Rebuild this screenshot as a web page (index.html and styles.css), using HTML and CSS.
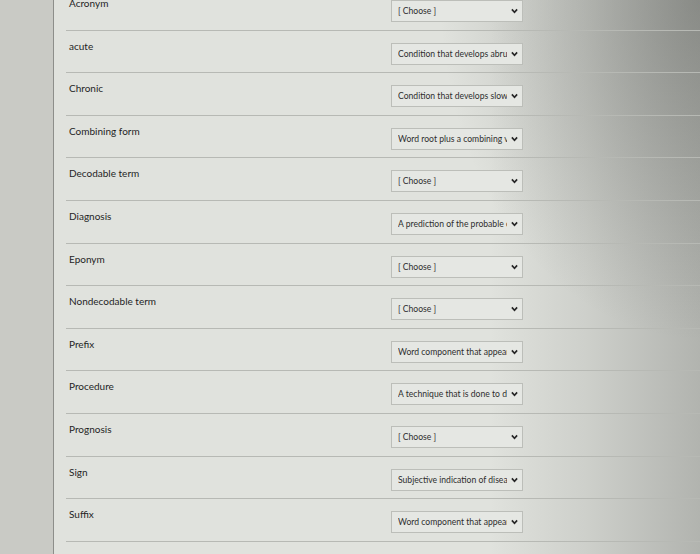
FILE: index.html
```html
<!DOCTYPE html>
<html>
<head>
<meta charset="utf-8">
<link rel="stylesheet" href="styles.css">
</head>
<body>
<div class="page">
  <div class="sidebar"></div>
  <div class="main">
    <div class="list">
      <div class="row"><div class="label">Acronym</div><div class="select"><span class="val">[ Choose ]</span><svg class="chev" viewBox="0 0 8 6"><path d="M1 1.2 L4 4.4 L7 1.2"/></svg></div></div>
      <div class="row"><div class="label">acute</div><div class="select"><span class="val">Condition that develops abruptly</span><svg class="chev" viewBox="0 0 8 6"><path d="M1 1.2 L4 4.4 L7 1.2"/></svg></div></div>
      <div class="row"><div class="label">Chronic</div><div class="select"><span class="val">Condition that develops slowly</span><svg class="chev" viewBox="0 0 8 6"><path d="M1 1.2 L4 4.4 L7 1.2"/></svg></div></div>
      <div class="row"><div class="label">Combining form</div><div class="select"><span class="val">Word root plus a combining vowel</span><svg class="chev" viewBox="0 0 8 6"><path d="M1 1.2 L4 4.4 L7 1.2"/></svg></div></div>
      <div class="row"><div class="label">Decodable term</div><div class="select"><span class="val">[ Choose ]</span><svg class="chev" viewBox="0 0 8 6"><path d="M1 1.2 L4 4.4 L7 1.2"/></svg></div></div>
      <div class="row"><div class="label">Diagnosis</div><div class="select"><span class="val">A prediction of the probable outcome</span><svg class="chev" viewBox="0 0 8 6"><path d="M1 1.2 L4 4.4 L7 1.2"/></svg></div></div>
      <div class="row"><div class="label">Eponym</div><div class="select"><span class="val">[ Choose ]</span><svg class="chev" viewBox="0 0 8 6"><path d="M1 1.2 L4 4.4 L7 1.2"/></svg></div></div>
      <div class="row"><div class="label">Nondecodable term</div><div class="select"><span class="val">[ Choose ]</span><svg class="chev" viewBox="0 0 8 6"><path d="M1 1.2 L4 4.4 L7 1.2"/></svg></div></div>
      <div class="row"><div class="label">Prefix</div><div class="select"><span class="val">Word component that appears</span><svg class="chev" viewBox="0 0 8 6"><path d="M1 1.2 L4 4.4 L7 1.2"/></svg></div></div>
      <div class="row"><div class="label">Procedure</div><div class="select"><span class="val">A technique that is done to diagnose</span><svg class="chev" viewBox="0 0 8 6"><path d="M1 1.2 L4 4.4 L7 1.2"/></svg></div></div>
      <div class="row"><div class="label">Prognosis</div><div class="select"><span class="val">[ Choose ]</span><svg class="chev" viewBox="0 0 8 6"><path d="M1 1.2 L4 4.4 L7 1.2"/></svg></div></div>
      <div class="row"><div class="label">Sign</div><div class="select"><span class="val">Subjective indication of disease</span><svg class="chev" viewBox="0 0 8 6"><path d="M1 1.2 L4 4.4 L7 1.2"/></svg></div></div>
      <div class="row"><div class="label">Suffix</div><div class="select"><span class="val">Word component that appears</span><svg class="chev" viewBox="0 0 8 6"><path d="M1 1.2 L4 4.4 L7 1.2"/></svg></div></div>
      <div class="row"><div class="label"></div><div class="select"></div></div>
    </div>
  </div>
</div>
</body>
</html>
```

FILE: styles.css
```css
html, body {
  margin: 0;
  padding: 0;
  height: 100%;
  overflow: hidden;
}
body {
  font-family: Lato, "Open Sans", "Liberation Sans", sans-serif;
  background: #dfe1dc;
}
.page {
  display: flex;
  height: 554px;
  overflow: hidden;
  background:
    radial-gradient(ellipse 260px 340px at 100% 0%, rgba(70,72,68,0.38), rgba(70,72,68,0) 100%),
    linear-gradient(to right, rgba(70,72,68,0) 0%, rgba(70,72,68,0) 70%, rgba(70,72,68,0.12) 84%, rgba(70,72,68,0.30) 100%),
    #e0e2dd;
}
.sidebar {
  width: 53px;
  flex: none;
  background: #c9cac5;
  border-right: 1px solid #8d8e8a;
}
.main {
  flex: 1;
  padding-left: 12px;
  overflow: hidden;
}
.list {
  margin-top: -13px;
}
.row {
  box-sizing: border-box;
  height: 42.6px;
  border-top: 1px solid #b7b9b4;
  display: grid;
  grid-template-columns: 325px 132px;
  align-items: start;
}
.label {
  padding-top: 9px;
  font-size: 10px;
  line-height: 13px;
  color: #1f1f1f;
  padding-left: 3px;
}
.select {
  margin-top: 12px;
  box-sizing: border-box;
  height: 22px;
  border: 1px solid #bcbeb9;
  background: #e5e7e3;
  display: flex;
  align-items: center;
  padding: 0 4px 0 6px;
  gap: 4px;
}
.val {
  flex: 1;
  min-width: 0;
  overflow: hidden;
  white-space: nowrap;
  font-size: 8.6px;
  color: #2e2e2e;
}
.chev {
  width: 7px;
  height: 6px;
  flex: none;
  fill: none;
  stroke: #262626;
  stroke-width: 1.9;
}
```
